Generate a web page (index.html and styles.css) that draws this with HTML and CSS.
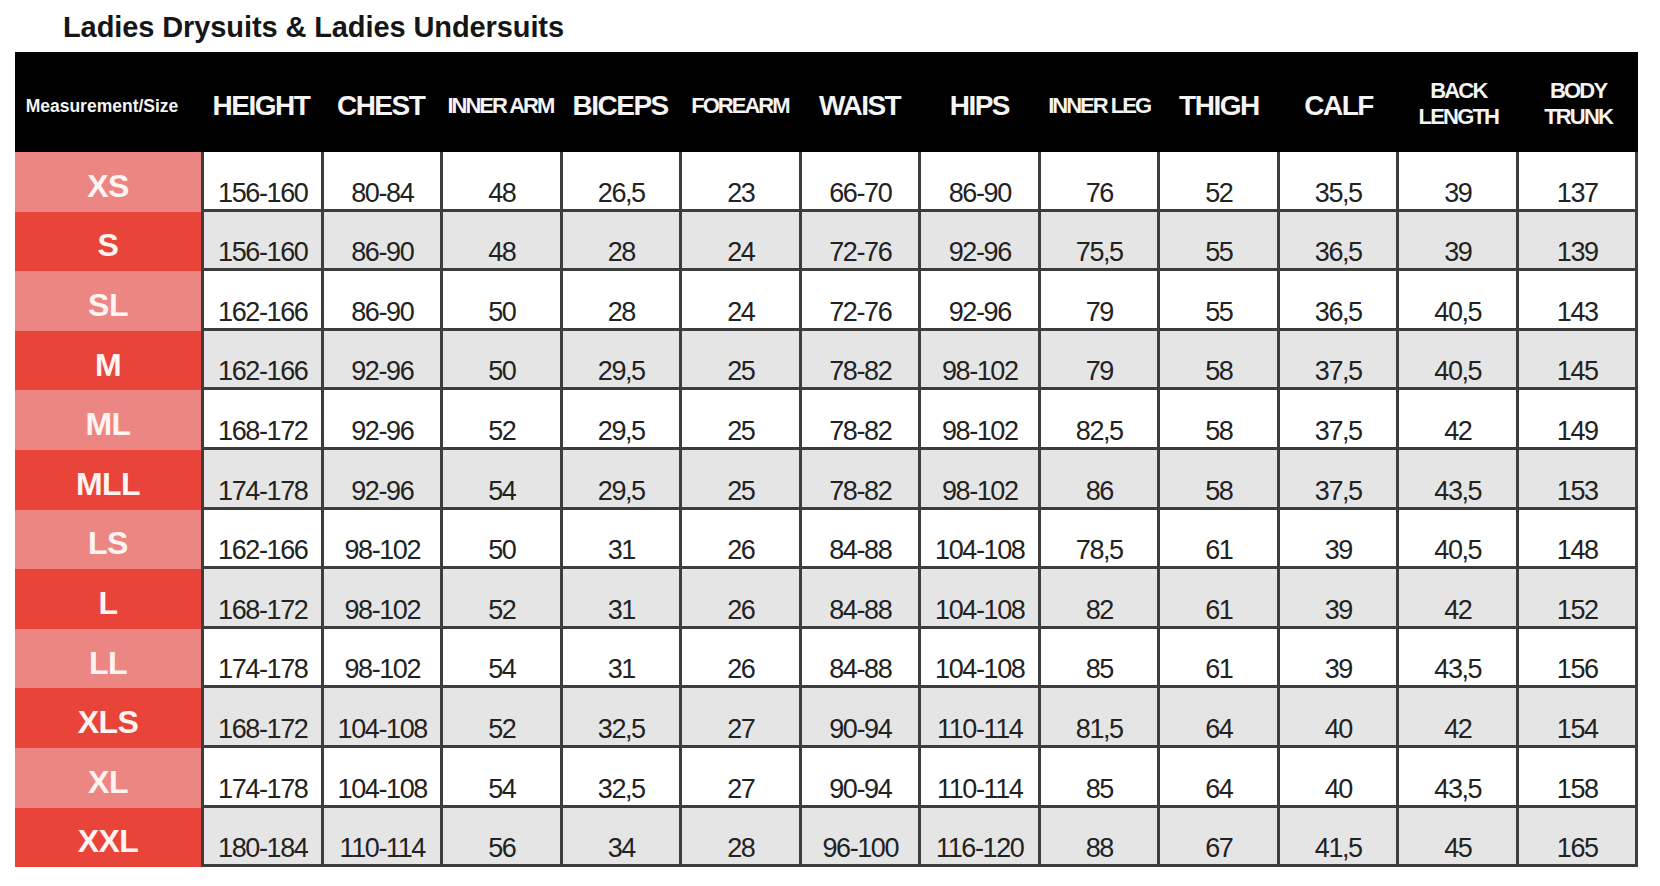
FILE: index.html
```html
<!DOCTYPE html>
<html lang="en">
<head>
<meta charset="utf-8">
<title>Ladies Drysuits &amp; Ladies Undersuits</title>
<link rel="stylesheet" href="styles.css">
</head>
<body>
<div class="page">
  <h1 class="title">Ladies Drysuits &amp; Ladies Undersuits</h1>
  <div class="chart">
    <div class="head">
      <div class="hc hc-size">Measurement/Size</div>
      <div class="hc">HEIGHT</div>
      <div class="hc">CHEST</div>
      <div class="hc hc-small">INNER ARM</div>
      <div class="hc">BICEPS</div>
      <div class="hc hc-small">FOREARM</div>
      <div class="hc">WAIST</div>
      <div class="hc">HIPS</div>
      <div class="hc hc-small">INNER LEG</div>
      <div class="hc">THIGH</div>
      <div class="hc">CALF</div>
      <div class="hc hc-two">BACK<br>LENGTH</div>
      <div class="hc hc-two">BODY<br>TRUNK</div>
    </div>
    <div class="body">
      <div class="sizes">
        <div class="sz sz-light">XS</div>
        <div class="sz sz-dark">S</div>
        <div class="sz sz-light">SL</div>
        <div class="sz sz-dark">M</div>
        <div class="sz sz-light">ML</div>
        <div class="sz sz-dark">MLL</div>
        <div class="sz sz-light">LS</div>
        <div class="sz sz-dark">L</div>
        <div class="sz sz-light">LL</div>
        <div class="sz sz-dark">XLS</div>
        <div class="sz sz-light">XL</div>
        <div class="sz sz-dark">XXL</div>
      </div>
      <div class="grid">
        <div class="c">156-160</div><div class="c">80-84</div><div class="c">48</div><div class="c">26,5</div><div class="c">23</div><div class="c">66-70</div><div class="c">86-90</div><div class="c">76</div><div class="c">52</div><div class="c">35,5</div><div class="c">39</div><div class="c">137</div>
        <div class="c g">156-160</div><div class="c g">86-90</div><div class="c g">48</div><div class="c g">28</div><div class="c g">24</div><div class="c g">72-76</div><div class="c g">92-96</div><div class="c g">75,5</div><div class="c g">55</div><div class="c g">36,5</div><div class="c g">39</div><div class="c g">139</div>
        <div class="c">162-166</div><div class="c">86-90</div><div class="c">50</div><div class="c">28</div><div class="c">24</div><div class="c">72-76</div><div class="c">92-96</div><div class="c">79</div><div class="c">55</div><div class="c">36,5</div><div class="c">40,5</div><div class="c">143</div>
        <div class="c g">162-166</div><div class="c g">92-96</div><div class="c g">50</div><div class="c g">29,5</div><div class="c g">25</div><div class="c g">78-82</div><div class="c g">98-102</div><div class="c g">79</div><div class="c g">58</div><div class="c g">37,5</div><div class="c g">40,5</div><div class="c g">145</div>
        <div class="c">168-172</div><div class="c">92-96</div><div class="c">52</div><div class="c">29,5</div><div class="c">25</div><div class="c">78-82</div><div class="c">98-102</div><div class="c">82,5</div><div class="c">58</div><div class="c">37,5</div><div class="c">42</div><div class="c">149</div>
        <div class="c g">174-178</div><div class="c g">92-96</div><div class="c g">54</div><div class="c g">29,5</div><div class="c g">25</div><div class="c g">78-82</div><div class="c g">98-102</div><div class="c g">86</div><div class="c g">58</div><div class="c g">37,5</div><div class="c g">43,5</div><div class="c g">153</div>
        <div class="c">162-166</div><div class="c">98-102</div><div class="c">50</div><div class="c">31</div><div class="c">26</div><div class="c">84-88</div><div class="c">104-108</div><div class="c">78,5</div><div class="c">61</div><div class="c">39</div><div class="c">40,5</div><div class="c">148</div>
        <div class="c g">168-172</div><div class="c g">98-102</div><div class="c g">52</div><div class="c g">31</div><div class="c g">26</div><div class="c g">84-88</div><div class="c g">104-108</div><div class="c g">82</div><div class="c g">61</div><div class="c g">39</div><div class="c g">42</div><div class="c g">152</div>
        <div class="c">174-178</div><div class="c">98-102</div><div class="c">54</div><div class="c">31</div><div class="c">26</div><div class="c">84-88</div><div class="c">104-108</div><div class="c">85</div><div class="c">61</div><div class="c">39</div><div class="c">43,5</div><div class="c">156</div>
        <div class="c g">168-172</div><div class="c g">104-108</div><div class="c g">52</div><div class="c g">32,5</div><div class="c g">27</div><div class="c g">90-94</div><div class="c g">110-114</div><div class="c g">81,5</div><div class="c g">64</div><div class="c g">40</div><div class="c g">42</div><div class="c g">154</div>
        <div class="c">174-178</div><div class="c">104-108</div><div class="c">54</div><div class="c">32,5</div><div class="c">27</div><div class="c">90-94</div><div class="c">110-114</div><div class="c">85</div><div class="c">64</div><div class="c">40</div><div class="c">43,5</div><div class="c">158</div>
        <div class="c g">180-184</div><div class="c g">110-114</div><div class="c g">56</div><div class="c g">34</div><div class="c g">28</div><div class="c g">96-100</div><div class="c g">116-120</div><div class="c g">88</div><div class="c g">67</div><div class="c g">41,5</div><div class="c g">45</div><div class="c g">165</div>
      </div>
    </div>
  </div>
</div>
</body>
</html>
```

FILE: styles.css
```css
html, body {
  margin: 0;
  padding: 0;
  background: #ffffff;
}

body {
  font-family: "Liberation Sans", Arial, sans-serif;
  color: #1e1e1e;
}

.page {
  padding: 11px 0 0 15px;
  width: 1623px;
}

.title {
  margin: 0 0 9px 48px;
  font-size: 29px;
  line-height: 32px;
  font-weight: bold;
  letter-spacing: -0.1px;
  color: #161616;
}

.chart {
  width: 1623px;
}

.head {
  display: grid;
  grid-template-columns: 186px repeat(12, 1fr);
  height: 100px;
  background: #000000;
}

.hc {
  display: flex;
  align-items: center;
  justify-content: center;
  text-align: center;
  padding-top: 8px;
  color: #f4f4f4;
  font-weight: bold;
  font-size: 28px;
  line-height: 30px;
  letter-spacing: -1.5px;
  white-space: nowrap;
}

.hc-size {
  font-size: 17.5px;
  letter-spacing: 0;
  padding-right: 12px;
}

.hc-small {
  font-size: 22px;
  letter-spacing: -2px;
}

.hc-two {
  font-size: 22px;
  line-height: 26px;
  letter-spacing: -1.8px;
  padding-top: 4px;
}

.body {
  display: flex;
}

.sizes {
  width: 186px;
  display: flex;
  flex-direction: column;
}

.sz {
  height: 59.6px;
  box-sizing: border-box;
  padding-top: 9px;
  display: flex;
  align-items: center;
  justify-content: center;
  font-weight: bold;
  font-size: 32px;
  letter-spacing: -0.5px;
  color: #fff4f2;
}

.sz-light {
  background: #ec8682;
}

.sz-dark {
  background: #e8443a;
}

.grid {
  width: 1437px;
  box-sizing: border-box;
  display: grid;
  grid-template-columns: repeat(12, 1fr);
  grid-auto-rows: 56.6px;
  gap: 3px;
  padding: 0 3px 3px 3px;
  background: #3d3d3d;
}

.c {
  background: #ffffff;
  display: flex;
  align-items: flex-end;
  justify-content: center;
  padding: 0 0 3px 1px;
  font-size: 27px;
  line-height: 26px;
  letter-spacing: -1.4px;
  color: #222222;
}

.c.g {
  background: #e5e5e5;
}
```
